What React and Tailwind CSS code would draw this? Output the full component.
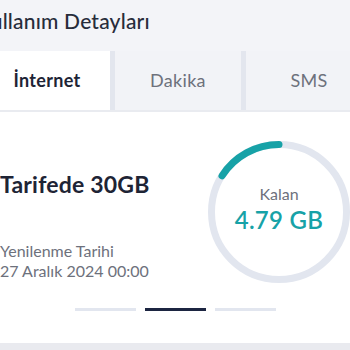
import { useState } from 'react'

const tabs = ['İnternet', 'Dakika', 'SMS']

function Gauge({ used, total }) {
  const r = 67.5
  const c = 2 * Math.PI * r
  const frac = used / total
  return (
    <div className="relative w-[142px] h-[142px] flex-shrink-0">
      <svg className="absolute inset-0" width="142" height="142" viewBox="0 0 142 142">
        <circle cx="71" cy="71" r={r} fill="none" stroke="#e2e6ef" strokeWidth="7" />
        <circle
          cx="71"
          cy="71"
          r={r}
          fill="none"
          stroke="#17a2a7"
          strokeWidth="7"
          strokeLinecap="round"
          strokeDasharray={`${c * frac} ${c}`}
          transform="rotate(-90 71 71) scale(1 -1) translate(0 -142)"
        />
      </svg>
      <div className="absolute inset-0 flex flex-col items-center justify-center pb-[6px]">
        <div className="text-[16px] leading-[20px] text-[#6d717c]">Kalan</div>
        <div className="text-[24px] leading-[28px] font-semibold tracking-[0.3px] text-[#17a2a7] mt-[2px]">4.79 GB</div>
      </div>
    </div>
  )
}

export default function App() {
  const [active, setActive] = useState(0)

  return (
    <div className="w-[350px] h-[350px] overflow-hidden bg-[#e9eaef] font-['Lato','Noto_Sans',sans-serif]">
      <div className="ml-[-16px] w-[388px]">
        <div className="h-[51px] bg-[#f3f4f8]">
          <div className="ml-[-7px] pt-[7px] text-[21px] leading-[28px] font-medium tracking-[0.2px] text-[#272c3b]">
            Kullanım Detayları
          </div>
        </div>
        <div className="flex gap-[5px] bg-[#e3e6ee] h-[59px]">
          {tabs.map((t, i) => (
            <button
              key={t}
              onClick={() => setActive(i)}
              className={
                i === active
                  ? 'flex-1 flex items-center justify-center bg-white text-[18px] font-bold tracking-[0.3px] text-[#1e2435]'
                  : 'flex-1 flex items-center justify-center bg-[#f2f3f7] text-[18px] tracking-[0.3px] text-[#6d717c]'
              }
            >
              {t}
            </button>
          ))}
        </div>
        <div className="h-[2px] bg-[#e9ebf0]" />
        <div className="bg-white h-[231px] pt-[29px] pl-[16px] pr-[22px]">
          <div className="flex justify-between">
            <div className="flex flex-col">
              <div className="mt-[29px] text-[23px] leading-[28px] font-bold tracking-[0.2px] text-[#1e2435]">Tarifede 30GB</div>
              <div className="mt-[43px] text-[16px] leading-[20px] text-[#6d717c]">
                <div>Yenilenme Tarihi</div>
                <div>27 Aralık 2024 00:00</div>
              </div>
            </div>
            <Gauge used={4.79} total={30} />
          </div>
          <div className="flex justify-center gap-[9px] mt-[25px]">
            <div className="w-[61px] h-[3px] bg-[#e2e6ef]" />
            <div className="w-[61px] h-[3px] bg-[#1c2541]" />
            <div className="w-[61px] h-[3px] bg-[#e2e6ef]" />
          </div>
        </div>
      </div>
    </div>
  )
}
